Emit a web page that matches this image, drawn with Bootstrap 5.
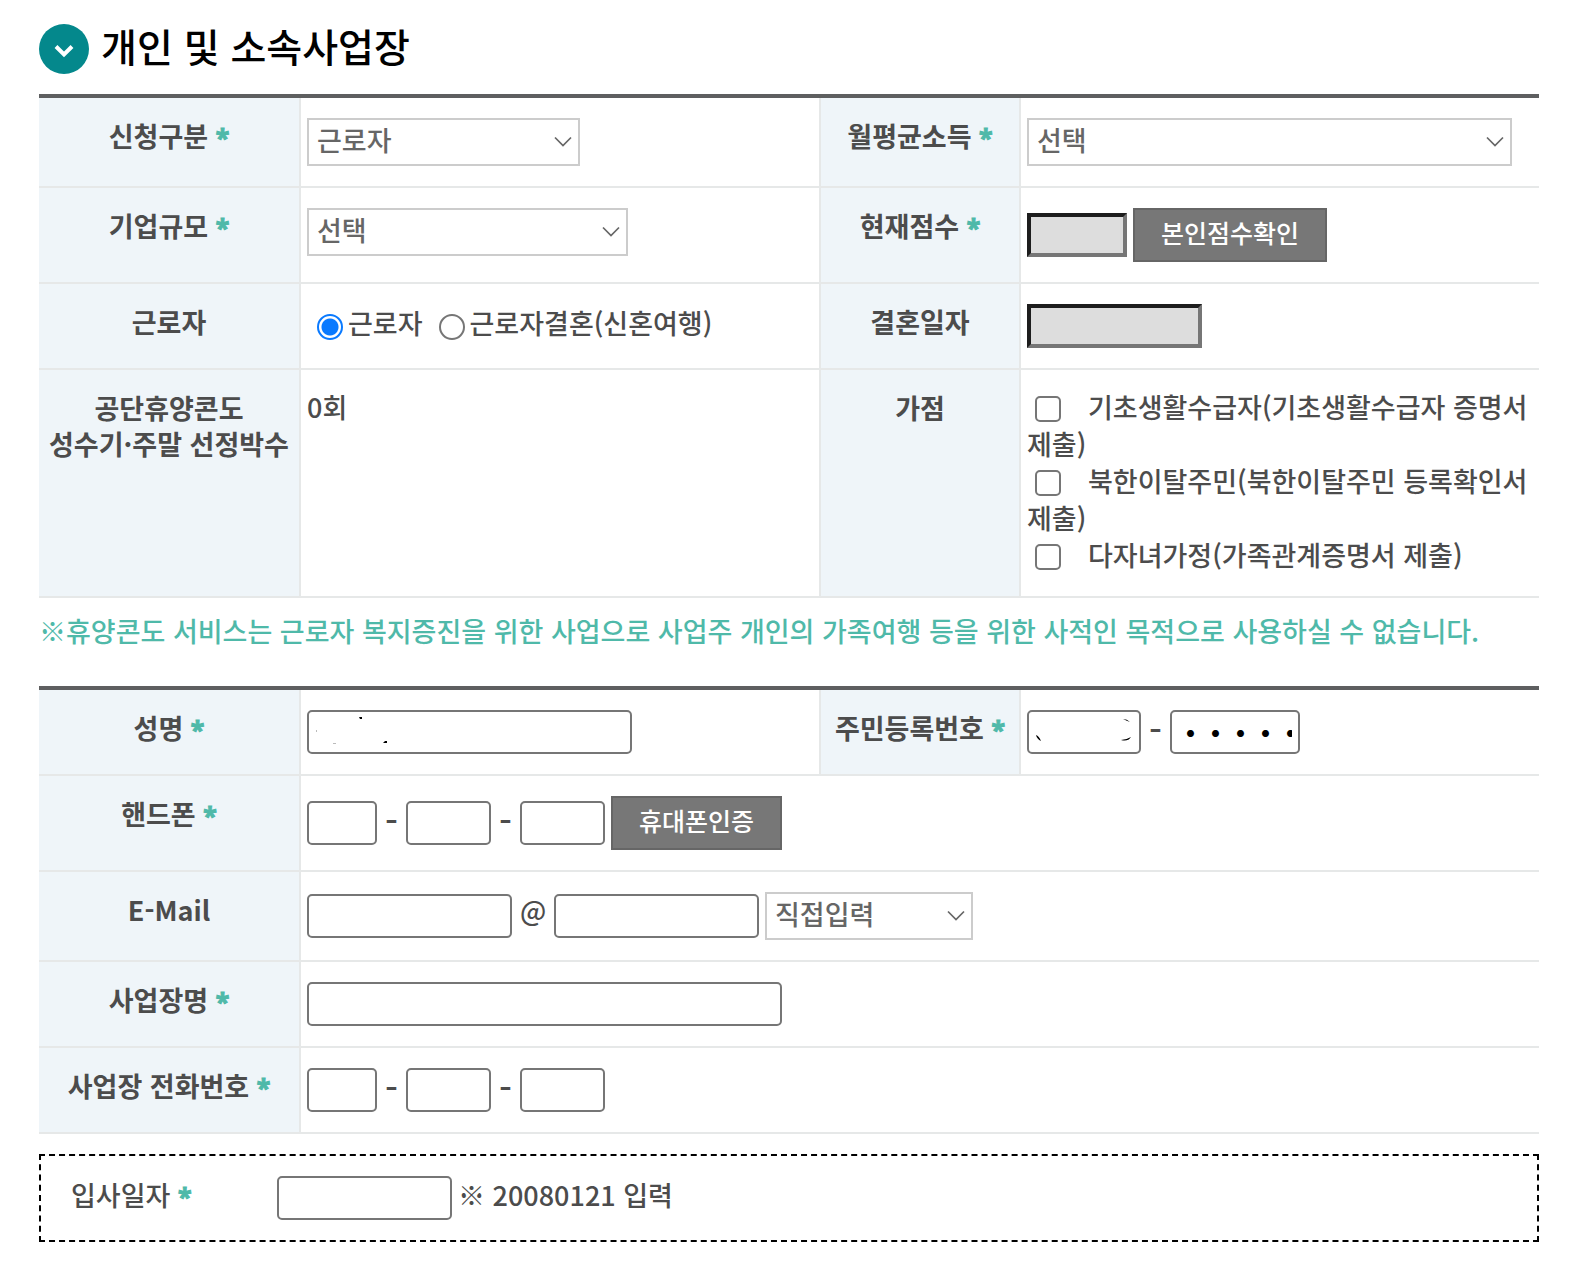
<!DOCTYPE html>
<html lang="ko">
<head>
<meta charset="utf-8">
<meta name="viewport" content="width=device-width, initial-scale=1">
<title>개인 및 소속사업장</title>
<link href="https://cdn.jsdelivr.net/npm/bootstrap@5.3.0/dist/css/bootstrap.min.css" rel="stylesheet">
<style>
body{font-family:"Noto Sans CJK KR",sans-serif;font-size:27px;line-height:37px;font-weight:500;color:#4c4c4c;background:#fff}
.page-wrap{padding:24px 41px 40px 39px}
.page-title{font-size:39px;line-height:42px;font-weight:500;color:#000;gap:12px;margin-bottom:20px}
.form-grid{table-layout:fixed;border-collapse:separate;border-spacing:0;border-top:4px solid #5e5f60}
.form-grid th,.form-grid td{padding:20px 6px;border-bottom:2px solid #e6e8e8;vertical-align:top}
.form-grid th{background:#eff5f9;border-right:2px solid #e6e8e8;text-align:center;font-weight:700;line-height:36px;white-space:nowrap;padding-left:0;padding-right:0}
.form-grid td + th{border-left:2px solid #e6e8e8}
.form-grid .text-cell{padding-top:18px;padding-bottom:23px}
.col-first{width:262px}
.col-second{width:202px}
.req{color:#4fb9a9;font-family:"Noto Sans",sans-serif;font-weight:700;font-size:25px;line-height:20px;-webkit-text-stroke:1px #4fb9a9}
.fields{gap:6px}
.txt{height:44px;border:2px solid #767676;border-radius:5px;background:#fff no-repeat 0 0;padding:0 6px;color:#000;font-size:27px}
.txt-locked{border:4px solid;border-color:#1d1d1d #767676 #767676 #1d1d1d;border-radius:0;background:#ddd}
.dots{font-size:25px;font-weight:900}
.rub-name{background-image:url("data:image/svg+xml,%3Csvg xmlns='http://www.w3.org/2000/svg' width='100' height='40'%3E%3Cpath d='M50 5h3v2h-2zM74 31l2-2h2v2z'/%3E%3Cpath fill='%23bbb' d='M7 18h1v2h-1zM24 31h3v1h-3z'/%3E%3C/svg%3E")}
.rub-num{background-image:url("data:image/svg+xml,%3Csvg xmlns='http://www.w3.org/2000/svg' width='110' height='40'%3E%3Cpath d='M7 23q3 1 5 6q-4-2-5-6zM94 7q4 0 7 3q-3-1-7-3zM92 28q5 0 10-3q-3 5-10 3z'/%3E%3C/svg%3E")}
.form-select.pick{height:48px;border:2px solid #ccc;border-radius:0;padding:0 40px 4px 8px;font-size:27px;line-height:36px;font-weight:500;color:#666;background-image:url("data:image/svg+xml,%3Csvg xmlns='http://www.w3.org/2000/svg' viewBox='0 0 18 12'%3E%3Cpath fill='none' stroke='%23666' stroke-width='1.7' d='M1 1.5l8 8 8-8'/%3E%3C/svg%3E");background-size:18px 12px;background-position:right 6px center}
.btn.act{height:54px;border:2px solid #666;border-radius:0;background:#777;color:#fff;font-size:25px;font-weight:500;line-height:36px;padding:4px 26px 10px}
.w-a{width:70px}.w-b{width:85px}.w-c{width:100px}.w-d{width:175px}.w-e{width:205px}.w-f{width:114px}.w-g{width:130px}
.w-name{width:325px}.w-firm{width:475px}
.s-a{width:273px}.s-b{width:321px}.s-c{width:485px}.s-d{width:208px}
.dash{width:17px;text-align:center;font-size:36px;padding-bottom:8px}
.at{width:30px;text-align:center;padding-bottom:12px}
.fields .dash,.fields .at{line-height:32px}
.form-check-input.tick{width:26px;height:26px;border:2px solid #767676;margin:0;float:none;background-color:#fff}
.form-check-input.tick[type=checkbox]{border-radius:5px;margin:0 27px 0 8px;vertical-align:-4px}
.form-check-input.tick[type=radio]{margin:10px 5px 0 0}
.form-check-input.tick[type=radio]:checked{border-color:#0a7aff;background-image:radial-gradient(circle,#0a7aff 8px,#fff 9px)}
.radios{padding-left:10px;gap:16px}
.note{color:#4fb9a9;padding:14px 0 37px}
.joined{border:2px dashed #000;padding:20px 30px;margin-top:20px}
.joined-label{width:206px}
.hint{margin-left:6px}
</style>
</head>
<body>
<main class="page-wrap">
<h1 class="page-title d-flex align-items-center">
<svg width="50" height="50" viewBox="0 0 50 50" aria-hidden="true"><circle cx="25" cy="25" r="25" fill="#04888c"/><path d="M17 22.500l8 8 8-8" fill="none" stroke="#fff" stroke-width="4"/></svg>
<span class="pb-2">개인 및 소속사업장</span>
</h1>
<form>
<table class="form-grid w-100">
<colgroup><col class="col-first"><col><col class="col-second"><col></colgroup>
<tbody>
<tr><th scope="row"><label for="kind">신청구분 <span class="req">*</span></label></th>
<td><select id="kind" class="form-select pick s-a"><option>근로자</option></select></td>
<th scope="row"><label for="income">월평균소득 <span class="req">*</span></label></th>
<td><select id="income" class="form-select pick s-c"><option>선택</option></select></td></tr>
<tr><th scope="row"><label for="scale">기업규모 <span class="req">*</span></label></th>
<td><select id="scale" class="form-select pick s-b"><option>선택</option></select></td>
<th scope="row"><label for="score">현재점수 <span class="req">*</span></label></th>
<td><div class="d-flex align-items-center fields"><input id="score" type="text" class="txt txt-locked w-c" readonly><button type="button" class="btn act">본인점수확인</button></div></td></tr>
<tr><th scope="row">근로자</th>
<td><div class="d-flex radios"><span class="d-flex"><input class="form-check-input tick" type="radio" name="worker" id="w1" checked><label for="w1">근로자</label></span><span class="d-flex"><input class="form-check-input tick" type="radio" name="worker" id="w2"><label for="w2">근로자결혼(신혼여행)</label></span></div></td>
<th scope="row"><label for="wedding">결혼일자</label></th>
<td><input id="wedding" type="text" class="txt txt-locked w-d d-block" readonly></td></tr>
<tr><th scope="row">공단휴양콘도<br>성수기·주말 선정박수</th>
<td class="text-cell">0회</td>
<th scope="row">가점</th>
<td class="text-cell"><div><input class="form-check-input tick" type="checkbox" id="p1"><label class="d-inline" for="p1">기초생활수급자(기초생활수급자 증명서 제출)</label></div>
<div><input class="form-check-input tick" type="checkbox" id="p2"><label class="d-inline" for="p2">북한이탈주민(북한이탈주민 등록확인서 제출)</label></div>
<div><input class="form-check-input tick" type="checkbox" id="p3"><label class="d-inline" for="p3">다자녀가정(가족관계증명서 제출)</label></div></td></tr>
</tbody>
</table>
<p class="note mb-0">※휴양콘도 서비스는 근로자 복지증진을 위한 사업으로 사업주 개인의 가족여행 등을 위한 사적인 목적으로 사용하실 수 없습니다.</p>
<table class="form-grid w-100">
<colgroup><col class="col-first"><col><col class="col-second"><col></colgroup>
<tbody>
<tr><th scope="row"><label for="name">성명 <span class="req">*</span></label></th>
<td><input id="name" type="text" class="txt rub-name w-name d-block"></td>
<th scope="row"><label for="rrn1">주민등록번호 <span class="req">*</span></label></th>
<td><div class="d-flex align-items-center fields"><input id="rrn1" type="text" class="txt rub-num w-f"><span class="dash">-</span><input type="text" class="txt dots w-g" value="・・・・・・・" aria-label="주민등록번호 뒷자리"></div></td></tr>
<tr><th scope="row"><label for="hp1">핸드폰 <span class="req">*</span></label></th>
<td colspan="3"><div class="d-flex align-items-center fields"><input id="hp1" type="text" class="txt w-a"><span class="dash">-</span><input type="text" class="txt w-b" aria-label="핸드폰 중간 번호"><span class="dash">-</span><input type="text" class="txt w-b" aria-label="핸드폰 끝 번호"><button type="button" class="btn act">휴대폰인증</button></div></td></tr>
<tr><th scope="row"><label for="em1">E-Mail</label></th>
<td colspan="3"><div class="d-flex align-items-center fields"><input id="em1" type="text" class="txt w-e"><span class="at">@</span><input type="text" class="txt w-e" aria-label="메일 도메인"><select class="form-select pick s-d" aria-label="도메인 선택"><option>직접입력</option></select></div></td></tr>
<tr><th scope="row"><label for="firm">사업장명 <span class="req">*</span></label></th>
<td colspan="3"><input id="firm" type="text" class="txt w-firm d-block"></td></tr>
<tr><th scope="row"><label for="tel1">사업장 전화번호 <span class="req">*</span></label></th>
<td colspan="3"><div class="d-flex align-items-center fields"><input id="tel1" type="text" class="txt w-a"><span class="dash">-</span><input type="text" class="txt w-b" aria-label="전화 중간 번호"><span class="dash">-</span><input type="text" class="txt w-b" aria-label="전화 끝 번호"></div></td></tr>
</tbody>
</table>
<div class="joined d-flex"><label class="joined-label" for="join">입사일자 <span class="req">*</span></label><input id="join" type="text" class="txt w-d"><span class="hint">※ 20080121 입력</span></div>
</form>
</main>
<script src="https://cdn.jsdelivr.net/npm/bootstrap@5.3.0/dist/js/bootstrap.bundle.min.js"></script>
</body>
</html>
